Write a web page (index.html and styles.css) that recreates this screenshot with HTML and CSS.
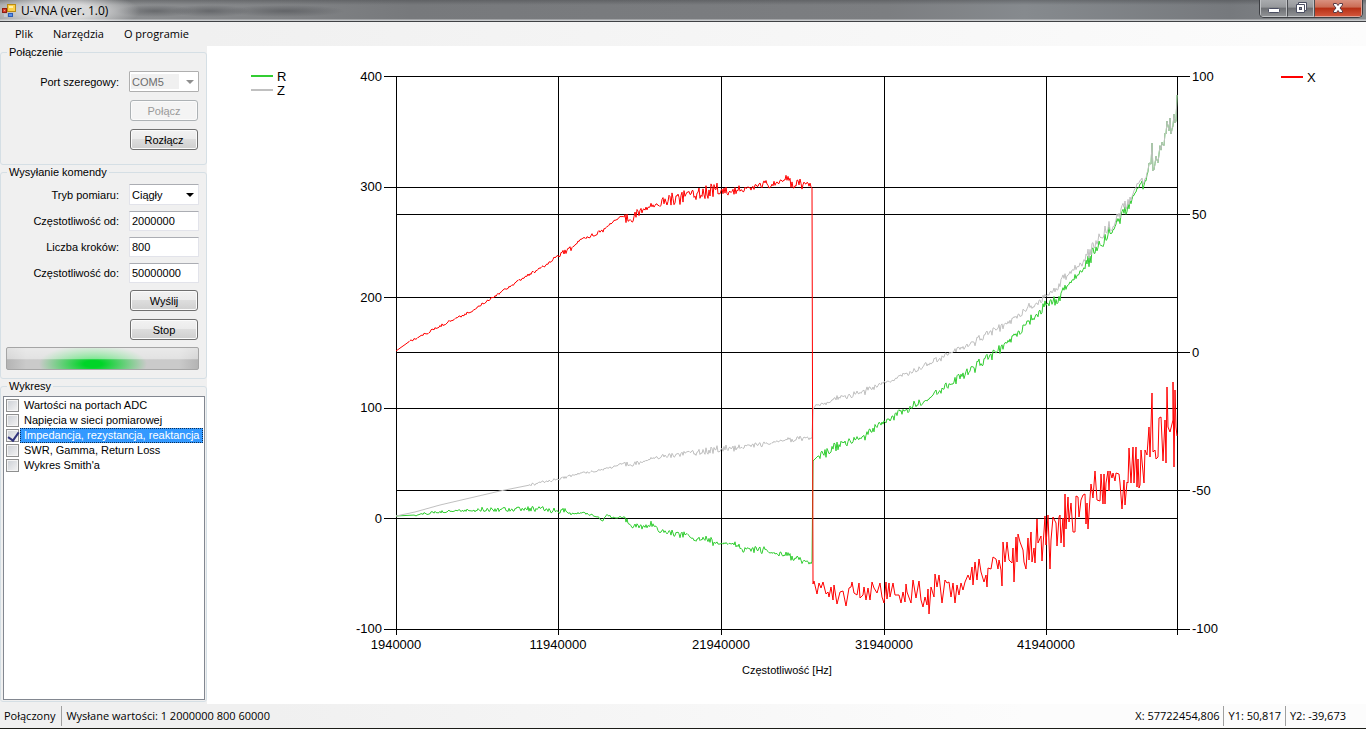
FILE: index.html
```html
<!DOCTYPE html>
<html lang="pl">
<head>
    <meta charset="UTF-8">
    <meta name="viewport" content="width=device-width, initial-scale=1.0">
    <title>U-VNA (ver. 1.0)</title>
    <link rel="stylesheet" href="styles.css">
</head>
<body>
    <header class="titlebar">
        <svg class="app-icon" viewBox="0 0 14 14" aria-hidden="true">
            <rect x="5.500" y="0.500" width="8" height="7" fill="#fbd04a" stroke="#b98a12"/>
            <rect x="0.500" y="4.500" width="4" height="4" fill="#d8412f" stroke="#8f1d12"/>
            <rect x="6.500" y="9.500" width="4" height="3" fill="#5b8fe8" stroke="#2c5cb4"/>
            <path d="M7 2h4v2H7z" fill="#fff0a8"/>
            <path d="M2 6h1v1H2z" fill="#f59a8a"/>
            <path d="M2 10h3v3H2z" fill="#c3c9d4"/>
        </svg>
        <h1 class="title">U-VNA (ver. 1.0)</h1>
        <div class="window-buttons">
            <button type="button" class="win-btn" aria-label="Minimalizuj">
                <svg width="14" height="12" viewBox="0 0 14 12"><rect x="1.500" y="6.500" width="11" height="4" rx="1" fill="#fff" stroke="#4a4e62"/></svg>
            </button>
            <button type="button" class="win-btn" aria-label="Przywróć">
                <svg width="14" height="12" viewBox="0 0 14 12">
                    <path d="M4.500 .5h8v8h-2v2h-8v-8h2z" fill="#fff" stroke="#4a4e62"/>
                    <path d="M4.500 2.500h6v6" fill="none" stroke="#4a4e62"/>
                    <rect x="5.500" y="5.500" width="2" height="2" fill="#8b8f9a" stroke="#4a4e62"/>
                </svg>
            </button>
            <button type="button" class="win-btn win-close" aria-label="Zamknij">
                <svg width="14" height="12" viewBox="0 0 14 12"><path d="M2.500 1.500h3L7 3.500l1.500-2h3v1.500L9 6l2.500 3v1.500h-3L7 8.500l-1.500 2h-3V9L5 6 2.500 3z" fill="#fff" stroke="#5a3a44"/></svg>
            </button>
        </div>
    </header>

    <nav class="menubar">
        <a href="#">Plik</a>
        <a href="#">Narzędzia</a>
        <a href="#">O programie</a>
    </nav>

    <main class="main">
        <form class="panel">
            <fieldset class="group">
                <legend>Połączenie</legend>
                <div class="fields connection">
                    <label for="port">Port szeregowy:</label>
                    <div class="combo disabled">
                        <select id="port" disabled><option>COM5</option></select>
                    </div>
                    <button type="button" class="btn" disabled>Połącz</button>
                    <button type="button" class="btn">Rozłącz</button>
                </div>
            </fieldset>

            <fieldset class="group">
                <legend>Wysyłanie komendy</legend>
                <div class="fields command">
                    <label for="mode">Tryb pomiaru:</label>
                    <div class="combo">
                        <select id="mode"><option>Ciągły</option></select>
                    </div>
                    <label for="from">Częstotliwość od:</label>
                    <input type="text" id="from" value="2000000">
                    <label for="steps">Liczba kroków:</label>
                    <input type="text" id="steps" value="800">
                    <label for="to">Częstotliwość do:</label>
                    <input type="text" id="to" value="50000000">
                </div>
                <div class="fields actions">
                    <button type="button" class="btn">Wyślij</button>
                    <button type="button" class="btn">Stop</button>
                </div>
                <progress class="progress" aria-label="Pomiar"></progress>
            </fieldset>

            <fieldset class="group charts">
                <legend>Wykresy</legend>
                <div class="checklist">
                    <label><input type="checkbox"><span>Wartości na portach ADC</span></label>
                    <label><input type="checkbox"><span>Napięcia w sieci pomiarowej</span></label>
                    <label class="selected"><input type="checkbox" checked><span>Impedancja, rezystancja, reaktancja</span></label>
                    <label><input type="checkbox"><span>SWR, Gamma, Return Loss</span></label>
                    <label><input type="checkbox"><span>Wykres Smith'a</span></label>
                </div>
            </fieldset>
        </form>

        <section class="chart-area">
            <svg class="chart" viewBox="207 46 1159 658" role="img" aria-label="Impedancja, rezystancja, reaktancja">
                <g class="grid">
                    <path d="M384 76.500H1190M384 187.500H1177M384 297.500H1177M384 408.500H1177M384 518.500H1177M384 629.500H1190"/>
                    <path d="M396 214.500H1190M396 352.500H1190M396 490.500H1190"/>
                    <path d="M396.500 76V635M558.500 76V635M721.500 76V635M884.500 76V635M1046.500 76V635M1177.500 76V635"/>
                </g>
                <polyline id="seriesR" class="series r"/>
                <polyline id="seriesZ" class="series z"/>
                <polyline id="seriesX" class="series x"/>

                <g class="axis axis-left">
                    <text x="382" y="81">400</text>
                    <text x="382" y="191">300</text>
                    <text x="382" y="302">200</text>
                    <text x="382" y="412">100</text>
                    <text x="382" y="523">0</text>
                    <text x="382" y="633">-100</text>
                </g>
                <g class="axis">
                    <text x="1192" y="81">100</text>
                    <text x="1192" y="219">50</text>
                    <text x="1192" y="357">0</text>
                    <text x="1192" y="495">-50</text>
                    <text x="1192" y="633">-100</text>
                </g>
                <g class="axis axis-bottom">
                    <text x="396" y="649">1940000</text>
                    <text x="558" y="649">11940000</text>
                    <text x="721" y="649">21940000</text>
                    <text x="884" y="649">31940000</text>
                    <text x="1046" y="649">41940000</text>
                    <text class="axis-title" x="787" y="674">Częstotliwość [Hz]</text>
                </g>
                <g class="legend">
                    <path class="r" d="M251 76H273"/>
                    <text x="277" y="81">R</text>
                    <path class="z" d="M251 90H273"/>
                    <text x="277" y="95">Z</text>
                    <path class="x" d="M1281 77H1303"/>
                    <text x="1307" y="82">X</text>
                </g>
            </svg>
        </section>
    </main>

    <footer class="statusbar">
        <span>Połączony</span>
        <span>Wysłane wartości: 1 2000000 800 60000</span>
        <span class="cursor-x">X: 57722454,806</span>
        <span>Y1: 50,817</span>
        <span>Y2: -39,673</span>
    </footer>

    <script src="chart.js"></script>
</body>
</html>
```

FILE: styles.css
```css
* {
    margin: 0;
    padding: 0;
    box-sizing: border-box;
}

body {
    font-family: "Liberation Sans", Arial, sans-serif;
    font-size: 11px;
    color: #000;
    background: #fff;
    height: 100vh;
    display: flex;
    flex-direction: column;
    overflow: hidden;
}

/* Title bar */
.titlebar {
    height: 22px;
    flex: none;
    display: flex;
    align-items: flex-start;
    padding: 0 3px 0 2px;
    border-bottom: 1px solid #3f4144;
    background:
        radial-gradient(ellipse 80px 20px at 60px 11px, rgba(255,255,255,0.65) 40%, rgba(255,255,255,0) 100%),
        radial-gradient(ellipse 40px 6px at 155px 11px, rgba(70,72,76,0.5), rgba(70,72,76,0)),
        radial-gradient(ellipse 40px 6px at 210px 11px, rgba(70,72,76,0.5), rgba(70,72,76,0)),
        radial-gradient(ellipse 60px 6px at 285px 11px, rgba(70,72,76,0.5), rgba(70,72,76,0)),
        linear-gradient(to bottom, rgba(50,52,55,0.35), rgba(255,255,255,0) 5px, rgba(255,255,255,0) 19px, #c9cbcd 20px),
        linear-gradient(to right, #96989a, #77797c 30%, #7c7e81 65%, #868a8e 75%, #76797d 90%, #8a8d90);
}

.app-icon {
    width: 14px;
    height: 14px;
    margin-top: 4px;
}

.title {
    flex: 1;
    margin-left: 5px;
    font-family: "Open Sans", sans-serif;
    font-size: 12px;
    line-height: 21px;
    font-weight: normal;
}

.window-buttons {
    display: flex;
    height: 18px;
    border: 1px solid #3c3e42;
    border-top: none;
    border-radius: 0 0 5px 5px;
    overflow: hidden;
}

.win-btn {
    width: 27px;
    display: flex;
    align-items: center;
    justify-content: center;
    border: 1px solid #c0c2c5;
    border-top: none;
    background: linear-gradient(#a9abae, #96989b 45%, #6d6f73 50%, #8f9194);
}

.win-btn + .win-btn {
    border-left-color: #4c4e52;
}

.win-close {
    width: 48px;
    border-color: #e0a396;
    background: linear-gradient(#d9917f, #cb6c54 45%, #b62f14 50%, #d2553a);
}

/* Menu */
.menubar {
    height: 24px;
    flex: none;
    display: flex;
    gap: 20px;
    padding-left: 15px;
    background: linear-gradient(to right, #f0f0f0 15%, #fcfcfc);
}

.menubar a {
    font-family: "Open Sans", sans-serif;
    font-size: 11px;
    line-height: 24px;
    color: #000;
    text-decoration: none;
}

.main {
    flex: 1;
    min-height: 0;
    display: flex;
}

/* Left panel */
.panel {
    width: 207px;
    flex: none;
    display: flex;
    flex-direction: column;
    gap: 1px;
    padding-bottom: 2px;
    background: #f0f0f0;
}

.group {
    border: 1px solid #d5dfe5;
    border-radius: 3px;
    padding: 0 7px 8px 5px;
    min-width: 0;
}

.group legend {
    margin-left: 1px;
    padding: 0 2px;
    line-height: 13px;
}

.fields {
    display: grid;
    grid-template-columns: 1fr 70px;
    column-gap: 10px;
    align-items: center;
}

.fields label {
    text-align: right;
}

.connection {
    row-gap: 8px;
    padding: 12px 0 6px;
}

.command {
    row-gap: 6px;
    padding-top: 5px;
}

.actions {
    row-gap: 8px;
    margin: 7px 0;
}

.btn {
    grid-column: 2;
    height: 21px;
    margin: 0 1px;
    border: 1px solid #707070;
    border-radius: 3px;
    box-shadow: inset 0 0 0 1px #fbfbfb;
    background: linear-gradient(#f2f2f2, #ebebeb 49%, #dddddd 50%, #cfcfcf);
    font: inherit;
    color: #000;
}

.btn:disabled {
    border-color: #adb2b5;
    background: #f4f4f4;
    color: #9a9a9a;
}

.fields input,
.combo select {
    width: 100%;
    height: 20px;
    padding: 0 2px;
    border: 1px solid #e2e3ea;
    border-top-color: #abadb3;
    background: #fff;
    font: inherit;
    color: #000;
    display: block;
}

.combo {
    position: relative;
}

.combo select {
    height: 21px;
    appearance: none;
    border-radius: 1px;
}

.combo::after {
    content: "";
    position: absolute;
    top: 9px;
    right: 5px;
    border: 4px solid transparent;
    border-top-color: #000;
    border-bottom: none;
    pointer-events: none;
}

.combo.disabled select {
    border-color: #afafaf;
    background: linear-gradient(#f0f0f0, #f0f0f0) 1px 2px / 48px 15px no-repeat #fff;
    color: #6d6d6d;
    opacity: 1;
}

.combo.disabled::after {
    border-top-color: #8f8f8f;
}

.progress {
    appearance: none;
    display: block;
    width: 100%;
    height: 23px;
    border: 1px solid #a5a5a5;
    border-radius: 2px;
    background:
        linear-gradient(rgba(255,255,255,0.6), rgba(255,255,255,0.45) 54%, rgba(255,255,255,0) 55%),
        radial-gradient(ellipse 60px 22px at 86px 16px, #00d428 15%, rgba(0,212,40,0) 90%),
        linear-gradient(to right, #b4b4b4, #cacaca 10%, #cacaca 90%, #b4b4b4);
}

.progress::-webkit-progress-bar {
    background: transparent;
}

.charts {
    flex: 1;
    padding: 3px 2px 1px;
    display: flex;
}

.charts legend {
    margin-left: 4px;
}

.checklist {
    flex: 1;
    margin-right: 1px;
    padding: 1px;
    border: 1px solid #828790;
    background: #fff;
}

.checklist label {
    display: flex;
    align-items: center;
    gap: 1px;
    height: 15px;
    padding-left: 1px;
    line-height: 13px;
    white-space: nowrap;
}

.checklist span {
    flex: 1;
    min-width: 0;
    padding: 0 3px;
    border: 1px solid transparent;
}

.checklist .selected span {
    border: 1px dotted #0b2c52;
    background: #3399ff;
    color: #fff;
}

.checklist input {
    appearance: none;
    width: 13px;
    height: 13px;
    flex: none;
    border: 1px solid #8e8f8f;
    box-shadow: inset 0 0 0 1px #f4f4f4;
    background: linear-gradient(135deg, #cbcfd5, #f4f4f4);
    position: relative;
}

.checklist input:checked::after {
    content: "";
    position: absolute;
    left: 3px;
    top: 0;
    width: 5px;
    height: 9px;
    border: solid #31347c;
    border-width: 0 2px 2px 0;
    transform: rotate(35deg);
}

/* Chart */
.chart-area {
    flex: 1;
    min-width: 0;
}

.chart {
    display: block;
    width: 100%;
    height: 100%;
}

.grid path {
    stroke: #000;
    fill: none;
    shape-rendering: crispEdges;
}

.series {
    fill: none;
    stroke-width: 1;
}

.r {
    stroke: #32cd32;
}

.z {
    stroke: #c0c0c0;
}

.x {
    stroke: #ff0000;
}

.legend path {
    stroke-width: 2;
}

.axis text,
.legend text {
    font-size: 13px;
}

.axis-left text {
    text-anchor: end;
}

.axis-bottom text {
    text-anchor: middle;
}

.axis .axis-title {
    font-size: 11px;
}

/* Status bar */
.statusbar {
    height: 25px;
    flex: none;
    display: flex;
    align-items: center;
    padding-right: 16px;
    border-bottom: 1px solid #1c1d18;
    background: linear-gradient(to right, #f0f0f0 20%, #fcfcfc 75%);
    font-family: "Open Sans", sans-serif;
    font-size: 11px;
}

.statusbar span {
    padding: 0 4px;
    line-height: 20px;
    border-left: 1px solid #a0a0a0;
}

.statusbar span:first-child,
.statusbar .cursor-x {
    border-left: none;
}

.statusbar span:first-child {
    padding-right: 6px;
}

.statusbar .cursor-x {
    margin-left: auto;
}
```

FILE: chart.js
```javascript
// Each row is x, y, jitter. Points between rows are interpolated 1px apart.
const tail = [
    [1149,163,0],[1151,164,1],[1152,143,0],[1153,171,0],[1154,170,1],[1156,155,2],[1158,163,2],
    [1160,150,4],[1163,146,5],[1165,133,1],[1166,134,1],[1167,121,0],[1169,131,1],[1170,118,0],
    [1171,134,0],[1173,125,1],[1174,114,0],[1175,123,0],[1176,121,0],[1177,95,0]
];

const r = [
    [396,516,0],[415,515,1],[430,513,1],[450,511,1],[475,510,2],[495,509,2],[515,509,2],
    [540,509,2],[558,511,2],[566,510,1],[568,514,1],[585,513,1],[597,516,1],[602,521,1],
    [607,515,1],[615,518,1],[624,518,2],[632,525,2],[642,527,3],[654,524,2],[660,531,2],
    [672,533,3],[688,535,1],[692,539,2],[708,538,3],[714,543,1],[735,544,2],[743,549,3],
    [765,550,1],[778,555,3],[795,557,2],[802,561,2],[812,562,2],[813,461,0],[819,455,3],
    [824,455,4],[834,448,4],[845,443,3],[855,440,3],[866,436,3],[878,425,3],[884,425,4],
    [895,415,3],[905,411,3],[918,402,3],[925,402,1],[935,393,3],[945,387,4],[958,378,4],
    [972,370,4],[985,359,4],[1000,350,3],[1012,339,4],[1022,330,3],[1028,321,5],[1038,313,4],
    [1047,304,4],[1060,298,3],[1065,287,3],[1073,279,2],[1080,272,2],[1086,266,6],[1094,250,5],
    [1104,240,5],[1110,230,4],[1120,219,4],[1128,207,4],[1134,198,3],[1137,186,4],[1143,184,4],
    [1147,177,2]
].concat(tail);

const z = [
    [396,516,0],[415,512,0],[440,505,0],[470,498,0],[500,491,0],[530,485,1],[558,479,1],
    [582,473,1],[600,470,1],[624,464,2],[640,463,1],[655,457,2],[675,455,2],[690,452,3],
    [705,451,3],[720,449,3],[735,448,2],[745,446,2],[765,444,1],[788,440,2],[812,437,1],
    [813,409,0],[816,405,1],[826,404,1],[836,398,2],[850,396,3],[868,390,2],[880,385,2],
    [892,381,1],[902,375,2],[914,371,2],[925,365,2],[932,362,3],[945,355,2],[955,350,2],
    [965,347,2],[975,342,3],[988,333,3],[1005,326,3],[1018,316,3],[1027,310,2],[1029,303,2],
    [1031,308,3],[1035,304,3],[1045,297,2],[1058,287,3],[1064,277,4],[1073,269,2],[1082,263,3],
    [1088,254,5],[1095,243,5],[1105,230,5],[1115,221,4],[1124,207,4],[1133,197,3],[1137,182,3],
    [1144,180,3],[1147,175,2]
].concat(tail);

const x = [
    [396,351,0],[410,341,1],[425,334,1],[450,321,1],[470,312,1],[490,299,1],[510,286,1],
    [530,274,1],[545,266,1],[558,255,2],[572,248,1],[580,240,1],[590,236,2],[605,229,1],
    [612,222,1],[622,217,1],[625,218,4],[632,217,4],[640,212,3],[650,206,2],[660,203,5],
    [672,199,6],[684,196,6],[695,192,6],[705,192,6],[715,189,5],[722,190,4],[728,193,3],
    [740,189,3],[752,188,2],[762,184,3],[775,185,2],[785,180,4],[795,184,4],[805,184,3],
    [811,182,5],[812,188,0],[813,584,0]
];

const xMeasured = "813,584 814,581 817,594 819,583 821,588 823,582 826,594 828,592 829,597 831,587 833,600 834,585 " +
    "837,604 840,592 843,591 846,606 849,588 851,587 852,582 854,593 857,595 859,583 860,598 863,595 864,587 " +
    "866,600 868,588 870,600 872,582 874,588 877,593 880,583 882,597 884,603 886,582 887,599 889,583 890,597 " +
    "893,583 895,595 899,595 901,603 903,592 905,602 906,584 907,592 911,603 913,580 916,598 919,581 921,600 " +
    "923,607 925,597 927,605 928,589 929,614 931,587 934,597 935,574 937,587 939,575 942,603 945,580 947,583 " +
    "949,582 951,597 953,583 955,603 957,585 959,595 961,583 963,590 965,582 968,575 970,580 972,567 973,585 " +
    "975,562 977,580 979,559 981,572 984,582 986,575 987,587 988,568 991,569 993,557 996,559 998,569 999,560 " +
    "1001,570 1002,586 1003,542 1005,562 1007,542 1009,560 1012,563 1013,548 1014,582 1016,537 1017,562 " +
    "1018,534 1020,542 1023,550 1024,562 1026,569 1028,538 1029,560 1031,532 1032,562 1034,548 1035,563 " +
    "1037,519 1038,543 1041,536 1042,561 1045,516 1046,545 1048,515 1050,569 1051,540 1053,517 1056,523 " +
    "1057,546 1059,517 1060,515 1061,543 1063,518 1064,547 1065,494 1066,529 1068,497 1069,522 1071,503 " +
    "1073,532 1075,532 1076,496 1078,497 1079,517 1081,500 1083,495 1085,494 1086,524 1087,503 1088,529 " +
    "1090,498 1091,484 1093,498 1095,471 1097,500 1100,501 1101,474 1103,504 1104,474 1105,504 1106,483 " +
    "1108,471 1109,491 1110,471 1112,478 1113,473 1115,481 1116,473 1119,474 1120,483 1122,509 1124,480 " +
    "1125,505 1127,482 1128,483 1129,448 1131,483 1133,447 1134,483 1136,447 1137,487 1138,459 1139,488 " +
    "1140,485 1141,450 1144,483 1145,450 1147,455 1149,427 1150,457 1152,393 1153,452 1155,450 1156,459 " +
    "1158,457 1159,418 1161,417 1163,461 1165,420 1166,463 1167,387 1168,427 1170,432 1173,420 1173,382 " +
    "1174,467 1175,390 1176,427 1177,436";

// Repeatable noise in the range -1.3..1.3
function noise(n) {
    const v = Math.sin(n * 12.9898) * 43758.5453;
    return ((v - Math.floor(v)) * 2 - 1) * 1.3;
}

function build(rows) {
    const points = [];
    for (let i = 0; i < rows.length - 1; i++) {
        const [x0, y0, j0] = rows[i];
        const [x1, y1] = rows[i + 1];
        for (let px = x0; px < x1; px++) {
            const y = y0 + (y1 - y0) * (px - x0) / (x1 - x0) + noise(px) * j0;
            points.push(px + ',' + y.toFixed(1));
        }
    }
    const last = rows[rows.length - 1];
    points.push(last[0] + ',' + last[1]);
    return points.join(' ');
}

document.getElementById('seriesR').setAttribute('points', build(r));
document.getElementById('seriesZ').setAttribute('points', build(z));
document.getElementById('seriesX').setAttribute('points', build(x) + ' ' + xMeasured);
```
